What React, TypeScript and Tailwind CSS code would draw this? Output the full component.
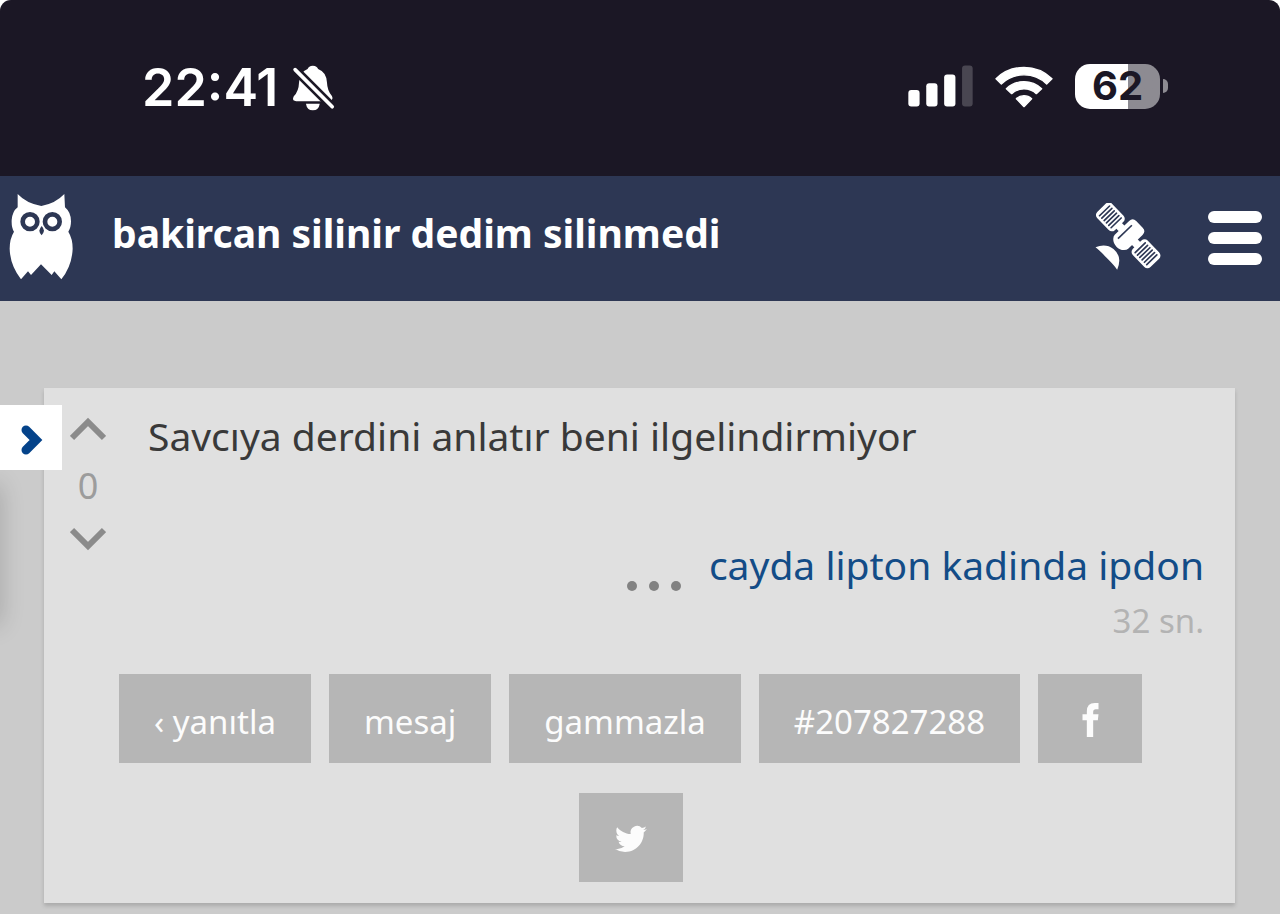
import type { ReactNode } from 'react';

const actions = [
    { label: '‹ yanıtla' },
    { label: 'mesaj' },
    { label: 'gammazla' },
    { label: '#207827288' },
];

const panelStripes = [-25, -15, -5, 5, 15, 25];

function BellOffIcon() {
    return (
        <svg viewBox="516 42 130 140" className="w-[43px] h-[46px]" aria-hidden="true">
            <path
                fill="#fff"
                d="M579 44Q566 45 563 54Q538 64 537 95Q536 122 521 137Q514 151 528 152H630Q643 149 637 136Q623 120 622 95Q620 63 595 54Q592 45 579 44Z"
            />
            <path fill="#fff" d="M558 160H600Q597 180 579 180Q561 180 558 160Z" />
            <path stroke="#1b1725" strokeWidth="27" d="M516 47L650 181" />
            <path stroke="#fff" strokeWidth="11" strokeLinecap="round" d="M525 56L638 169" />
        </svg>
    );
}

function SignalIcon() {
    return (
        <svg viewBox="54 44 196 126" className="w-[65px] h-[42px]" aria-hidden="true">
            <g fill="#fff">
                <rect x="55" y="119" width="34" height="50" rx="9" />
                <rect x="109" y="99" width="34" height="70" rx="9" />
                <rect x="163" y="72" width="34" height="97" rx="9" />
                <rect x="217" y="45" width="32" height="124" rx="9" fill="#494651" />
            </g>
        </svg>
    );
}

function WifiIcon() {
    return (
        <svg viewBox="316 41 174 129" className="w-[58px] h-[43px]" aria-hidden="true">
            <g fill="#fff" stroke="#fff" strokeWidth="4" strokeLinejoin="round">
                <path d="M319 82A121 121 0 0 1 487 82L471 98A98 98 0 0 0 335 98Z" />
                <path d="M350 112A77 77 0 0 1 456 112L440 127A55 55 0 0 0 366 127Z" />
                <path d="M380 142A34 34 0 0 1 426 142L403 166Z" />
            </g>
        </svg>
    );
}

function OwlIcon() {
    return (
        <svg viewBox="26 42 192 258" className="w-16 h-[86px]" aria-hidden="true">
            <path
                fill="#fff"
                d="M52 42Q78 70 123 78Q166 70 192 42L194 82Q212 97 212 124Q212 143 204 155Q217 176 217 206Q215 258 183 298L162 274L154 285L122 253L92 285L83 274L62 298Q29 255 28 206Q28 176 41 155Q33 143 34 120Q36 94 52 82Z"
            />
            <g fill="#fff" stroke="#2d3754" strokeWidth="14">
                <circle cx="89" cy="125" r="22" />
                <circle cx="156" cy="125" r="22" />
            </g>
            <path fill="#2d3754" d="M124 138Q131 146 131 152Q129 161 124 166Q118 161 117 152Q118 145 124 138Z" />
        </svg>
    );
}

function SatelliteIcon() {
    return (
        <svg viewBox="44 64 200 204" className="w-[67px] h-[68px]" aria-hidden="true">
            <g transform="translate(143 161) rotate(46)">
                <rect x="-50" y="-12" width="100" height="24" fill="#fff" />
                <path
                    fill="#fff"
                    d="M-14 -47H14Q29 -47 29 -32V28Q29 34 23 40Q14 49 0 49Q-14 49 -23 40Q-29 34 -29 28V-32Q-29 -47 -14 -47Z"
                />
                <path stroke="#2d3754" strokeWidth="5" d="M-14 -29V29" />
                {[-77, 77].map((x) => (
                    <g key={x} transform={`translate(${x} 0)`}>
                        <rect x="-38" y="-31" width="76" height="62" rx="13" fill="#fff" />
                        {panelStripes.map((s) => (
                            <path key={s} stroke="#2d3754" strokeWidth="5" strokeLinecap="round" d={`M${s} -21V21`} />
                        ))}
                    </g>
                ))}
            </g>
            <path fill="#fff" d="M45 197Q75 184 99 202Q127 225 110 264Q102 252 79 229Q57 206 45 197Z" />
        </svg>
    );
}

function StatusBar() {
    return (
        <div className="flex h-44 items-center justify-between bg-[#1b1725] pl-[142px] pr-28 font-['Inter',sans-serif] text-white">
            <div className="flex items-center gap-[14px]">
                <span className="text-[52px] font-semibold leading-none">22:41</span>
                <BellOffIcon />
            </div>
            <div className="flex items-center gap-[22px] pb-1">
                <SignalIcon />
                <WifiIcon />
                <div className="flex items-center gap-[3px]">
                    <div className="flex h-[45px] w-[85px] items-center justify-center rounded-[15px] bg-linear-to-r from-white from-62% to-[#8d8b92] to-62% text-[40px] font-bold leading-none text-[#1b1725]">
                        62
                    </div>
                    <div className="h-[14px] w-[5px] rounded-r-full bg-[#8d8b92]" />
                </div>
            </div>
        </div>
    );
}

function Header() {
    return (
        <header className="flex h-[125px] items-center bg-[#2d3754] pb-1 pl-[9px] pr-[18px] text-white">
            <a href="#" aria-label="ana sayfa">
                <OwlIcon />
            </a>
            <h1 className="ml-[39px] flex-1 pb-2 text-[39px] font-bold leading-none">bakircan silinir dedim silinmedi</h1>
            <button type="button" aria-label="olan biten" className="mr-[46px]">
                <SatelliteIcon />
            </button>
            <button type="button" aria-label="menü" className="flex w-[54px] flex-col gap-[9px] pt-[2px]">
                <span className="h-3 rounded-full bg-white" />
                <span className="h-3 rounded-full bg-white" />
                <span className="h-3 rounded-full bg-white" />
            </button>
        </header>
    );
}

function VoteArrow({ label, d }: { label: string; d: string }) {
    return (
        <button type="button" aria-label={label}>
            <svg viewBox="0 0 36 24" className="h-6 w-9" aria-hidden="true">
                <path fill="none" stroke="#8b8b8b" strokeWidth="6" d={d} />
            </svg>
        </button>
    );
}

function ActionButton({ label, children }: { label?: string; children: ReactNode }) {
    return (
        <button
            type="button"
            aria-label={label}
            className="mr-[18px] flex h-[89px] min-w-[104px] items-center justify-center bg-[#b6b6b6] px-[35px] pt-[6px] text-[33px] leading-none text-[#fcfcfc]"
        >
            {children}
        </button>
    );
}

function Entry() {
    return (
        <article className="bg-[#e0e0e0] pb-[21px] shadow-[0_3px_4px_rgba(0,0,0,0.16)]">
            <div className="flex">
                <div className="flex w-[88px] flex-col items-center pt-[29px] text-[#9c9c9c]">
                    <VoteArrow label="yukarı" d="M2 21L18 5L34 21" />
                    <span className="mb-[22px] mt-[26px] text-4xl leading-[38px]">0</span>
                    <VoteArrow label="aşağı" d="M2 3L18 19L34 3" />
                </div>
                <div className="flex-1 pl-4 pr-[31px] pt-[23px]">
                    <p className="text-[39px] leading-[50px] text-[#393939]">Savcıya derdini anlatır beni ilgelindirmiyor</p>
                    <div className="mt-[78px] flex items-center justify-end gap-7">
                        <button type="button" aria-label="diğer" className="flex gap-3 pt-[42px]">
                            <span className="size-[10px] rounded-full bg-[#828282]" />
                            <span className="size-[10px] rounded-full bg-[#828282]" />
                            <span className="size-[10px] rounded-full bg-[#828282]" />
                        </button>
                        <a href="#" className="text-[39px] leading-[50px] text-[#134c87]">
                            cayda lipton kadinda ipdon
                        </a>
                    </div>
                    <div className="mt-[6px] text-right text-[33px] leading-[48px] text-[#b3b3b3]">32 sn.</div>
                </div>
            </div>
            <div className="mt-[29px] flex flex-wrap justify-center gap-y-[30px] px-6">
                {actions.map((action) => (
                    <ActionButton key={action.label}>{action.label}</ActionButton>
                ))}
                <ActionButton label="facebook">
                    <svg viewBox="186 126 50 102" className="mb-1 h-[34px] w-[17px]" aria-hidden="true">
                        <path
                            fill="currentColor"
                            d="M200 228V178H187V160H200V151Q200 126 224 126H235V145H227Q219 145 219 153V160H235L233 178H219V228Z"
                        />
                    </svg>
                </ActionButton>
                <ActionButton label="twitter">
                    <svg viewBox="0 0 24 24" className="mb-1 size-8 shrink-0" aria-hidden="true">
                        <path
                            fill="currentColor"
                            d="M23.95 4.57a10 10 0 0 1-2.82.77 4.96 4.96 0 0 0 2.16-2.72c-.95.55-2 .96-3.13 1.18a4.92 4.92 0 0 0-8.38 4.48C7.69 8.1 4.07 6.13 1.64 3.16a4.82 4.82 0 0 0-.67 2.48c0 1.71.87 3.21 2.19 4.1a4.9 4.9 0 0 1-2.23-.62v.06a4.92 4.92 0 0 0 3.95 4.83 5 5 0 0 1-2.21.08 4.94 4.94 0 0 0 4.6 3.42A9.87 9.87 0 0 1 0 19.54a13.99 13.99 0 0 0 7.55 2.21c9.05 0 14-7.5 14-13.98 0-.21 0-.42-.02-.63a9.94 9.94 0 0 0 2.42-2.57z"
                        />
                    </svg>
                </ActionButton>
            </div>
        </article>
    );
}

export default function App() {
    return (
        <div className="min-h-screen bg-white font-['Noto_Sans',sans-serif]">
            <div className="overflow-hidden rounded-t-[11px] bg-[#cbcbcb]">
                <StatusBar />
                <Header />
                <main className="relative overflow-hidden pb-[11px] pl-11 pr-[45px] pt-[87px]">
                    {/* Shadow of the closed side menu */}
                    <div className="absolute -left-5 top-[184px] h-[140px] w-5 shadow-[0_0_24px_rgba(0,0,0,0.2)]" />
                    <Entry />
                    {/* Side menu handle */}
                    <button
                        type="button"
                        aria-label="başlıkları aç"
                        className="absolute left-0 top-[104px] flex h-[65px] w-[62px] items-center justify-end bg-white pr-[19px] pt-1"
                    >
                        <svg viewBox="0 0 22 30" className="h-[30px] w-[22px]" aria-hidden="true">
                            <path
                                fill="none"
                                stroke="#04438a"
                                strokeWidth="9"
                                strokeLinecap="round"
                                d="M5 5L15 15L5 25"
                            />
                        </svg>
                    </button>
                </main>
            </div>
        </div>
    );
}
